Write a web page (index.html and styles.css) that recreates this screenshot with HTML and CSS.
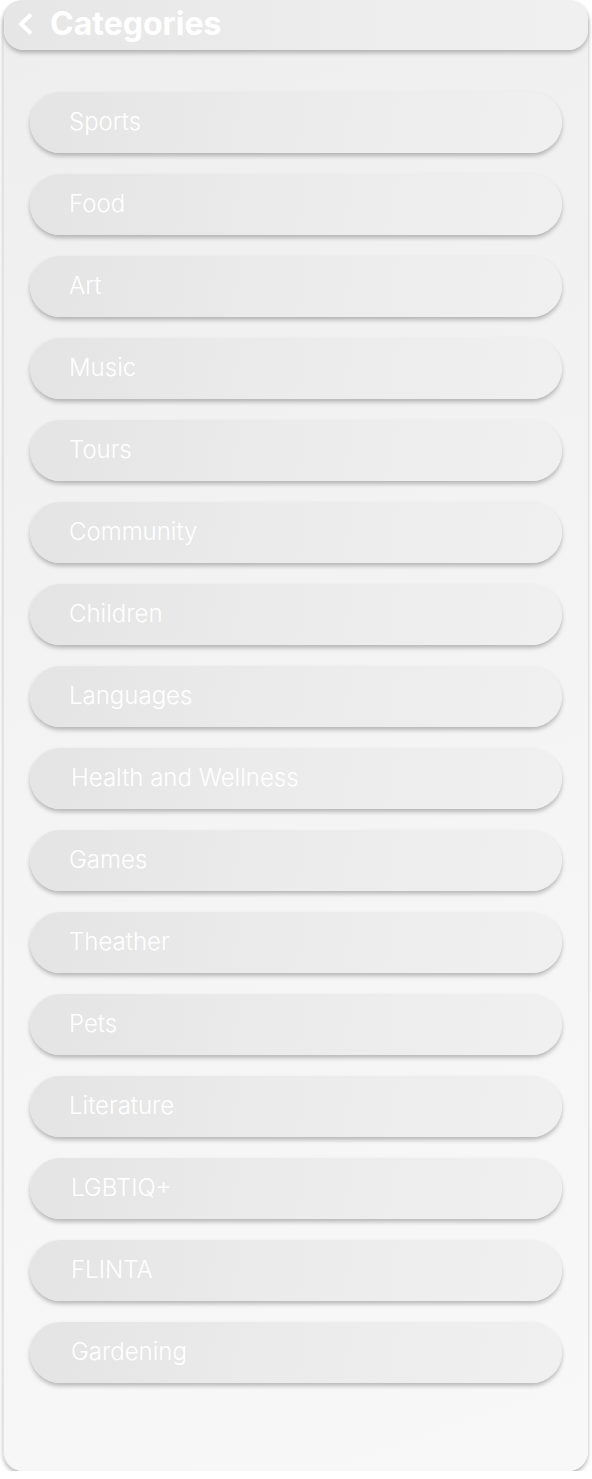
FILE: index.html
```html
<!DOCTYPE html>
<html>
<head>
<meta charset="utf-8">
<link rel="stylesheet" href="styles.css">
</head>
<body>
<div class="card">
  <header class="header">
    <svg class="back" width="18" height="24" viewBox="0 0 18 24"><path d="M15 2.5 L5 12 L15 21.5" fill="none" stroke="#fff" stroke-width="4" stroke-linecap="butt" stroke-linejoin="miter"/></svg>
    <h1 class="title">Categories</h1>
  </header>
  <ul class="list">
    <li class="item">Sports</li>
    <li class="item">Food</li>
    <li class="item">Art</li>
    <li class="item">Music</li>
    <li class="item">Tours</li>
    <li class="item">Community</li>
    <li class="item">Children</li>
    <li class="item">Languages</li>
    <li class="item item-shift">Health and Wellness</li>
    <li class="item">Games</li>
    <li class="item">Theather</li>
    <li class="item">Pets</li>
    <li class="item">Literature</li>
    <li class="item item-shift">LGBTIQ+</li>
    <li class="item item-shift">FLINTA</li>
    <li class="item item-shift">Gardening</li>
  </ul>
</div>
</body>
</html>
```
FILE: styles.css
```css
html, body {
  margin: 0;
  padding: 0;
  background: #ffffff;
}
body {
  font-family: Inter, "Noto Sans", sans-serif;
}
.card {
  margin-left: 3px;
  width: 585px;
  height: 1471px;
  box-sizing: border-box;
  border-radius: 20px;
  background: linear-gradient(160deg, #eeeeee 0%, #f5f5f5 60%, #f8f8f8 100%);
  box-shadow: 0 3px 4px rgba(0, 0, 0, 0.28), inset 1px 0 0 #e4e4e4;
}
.header {
  margin-left: 1px;
  height: 50px;
  border-radius: 20px;
  background: linear-gradient(90deg, #e6e6e6 0%, #ececec 50%, #f0f0f0 100%);
  box-shadow: 0 3px 4px rgba(0, 0, 0, 0.25);
  display: flex;
  align-items: center;
  padding-left: 12px;
  gap: 16px;
}
.back {
  display: block;
  margin-top: -2px;
}
.title {
  margin: 0;
  font-size: 32px;
  font-weight: 700;
  color: #ffffff;
  line-height: 1;
  margin-top: -2px;
}
.list {
  list-style: none;
  margin: 0;
  padding: 42px 26px 0 27px;
  display: flex;
  flex-direction: column;
  gap: 21px;
}
.item {
  height: 61px;
  border-radius: 31px;
  background: linear-gradient(100deg, #e4e4e4 0%, #ebebeb 45%, #f0f0f0 100%);
  box-shadow: 0 3px 4px rgba(0, 0, 0, 0.25);
  display: flex;
  align-items: center;
  padding-left: 39px;
  padding-bottom: 2px;
  box-sizing: border-box;
  font-size: 24px;
  font-weight: 300;
  color: #ffffff;
}
.item-shift {
  padding-left: 41px;
}
```
